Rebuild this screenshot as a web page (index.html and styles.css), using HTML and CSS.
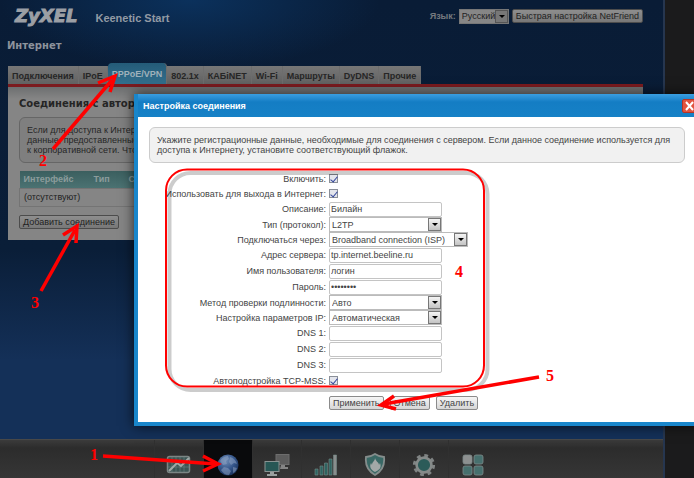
FILE: index.html
```html
<!DOCTYPE html>
<html lang="ru">
<head>
<meta charset="utf-8">
<title>ZyXEL Keenetic Start</title>
<link rel="stylesheet" href="styles.css">
</head>
<body>
<div class="app">
  <header class="top">
    <span class="logo">ZyXEL</span>
    <span class="model">Keenetic Start</span>
    <div class="tools">
      <label class="lang" for="lang">Язык:</label>
      <span class="pick pick-lang"><select id="lang"><option>Русский</option></select></span>
      <button class="btn btn-dim" type="button">Быстрая настройка NetFriend</button>
    </div>
  </header>
  <h1 class="title">Интернет</h1>
  <nav class="tabs">
    <a href="#">Подключения</a>
    <a href="#">IPoE</a>
    <a href="#" class="active">PPPoE/VPN</a>
    <a href="#">802.1x</a>
    <a href="#">КАБiNET</a>
    <a href="#">Wi-Fi</a>
    <a href="#">Маршруты</a>
    <a href="#">DyDNS</a>
    <a href="#">Прочие</a>
  </nav>
  <main class="panel">
    <h2>Соединения с автор</h2>
    <p class="note note-dim">Если для доступа к Интерн<br>данные, предоставленные<br>к корпоративной сети. Чтоб</p>
    <table class="links">
      <thead><tr><th class="c-if">Интерфейс</th><th class="c-type">Тип</th><th>С</th></tr></thead>
      <tbody><tr><td colspan="3">(отсутствуют)</td></tr></tbody>
    </table>
    <button class="btn btn-dim" type="button">Добавить соединение</button>
  </main>
  <nav class="dock">
    <a href="#" aria-label="Монитор"><svg width="26" height="22" viewBox="0 0 26 22"><rect x="1.500" y="2.500" width="22" height="16" rx="2" fill="#3c5553" stroke="#7b8584" stroke-width="1.500"/><path d="M6 3v15M10 3v15M14 3v15M18 3v15M2 8h21M2 13h21" stroke="#6a8583" stroke-width=".6"/><path d="M3 17l8-8 4 3 8-8" fill="none" stroke="#a2a8a7" stroke-width="2"/></svg></a>
    <a href="#" class="on" aria-label="Интернет"><svg width="24" height="24" viewBox="0 0 24 24"><defs><radialGradient id="g" cx=".4" cy=".3" r=".7"><stop offset="0" stop-color="#6f8cb4"/><stop offset=".6" stop-color="#34558a"/><stop offset="1" stop-color="#1c3560"/></radialGradient></defs><circle cx="12" cy="12" r="10.500" fill="url(#g)"/><path d="M4 8c2-4 6-5 8-5l1 3-3 2 1 3-4 1zM14 4c4 1 6 4 7 7l-3-1-3 2-2-3zM8 14l4 1 3 3-2 4c-4 0-6-2-8-5zM17 14l4 1c-1 3-2 4-4 5z" fill="#91a6c5" opacity=".5"/></svg></a>
    <a href="#" aria-label="Домашняя сеть"><svg width="26" height="24" viewBox="0 0 26 24"><rect x="12" y="1.500" width="13" height="10" fill="#5d5d5d" stroke="#6d6d6d"/><path d="M17 12h4v2h3v2h-8z" fill="#858585"/><rect x="1" y="8.500" width="14" height="10" fill="#275755" stroke="#899392"/><path d="M6 19h4v2h3v2H3v-2h3z" fill="#9aa1a0"/></svg></a>
    <a href="#" aria-label="Беспроводная сеть"><svg width="24" height="22" viewBox="0 0 24 22"><g stroke="#738987" stroke-width=".6"><path fill="#2f6461" d="M1 15h3v6H1zM6 12h3v9H6zM10.500 9h3v12h-3zM15 5h3v16h-3z"/><path fill="#898d8d" d="M19.500 1h3v20h-3z"/></g></svg></a>
    <a href="#" aria-label="Безопасность"><svg width="22" height="24" viewBox="0 0 22 24"><path d="M11 1c3 2 6 3 9 3 1 8-2 14-9 18C4 18 1 12 2 4c3 0 6-1 9-3z" fill="#396865" stroke="#858d8c" stroke-width="1.800"/><path d="M11 5c1 4 4 4 4 7l1-2c2 5-1 7-5 9-4-2-6-5-4-9l1 2c0-3 3-4 3-7z" fill="#a2a8a7"/></svg></a>
    <a href="#" aria-label="Система"><svg width="24" height="24" viewBox="0 0 24 24"><circle cx="12" cy="12" r="9.600" fill="none" stroke="#808484" stroke-width="3" stroke-dasharray="3.770 3.770"/><circle cx="12" cy="12" r="7.400" fill="#2c5b59" stroke="#858a89" stroke-width="2.600"/></svg></a>
    <a href="#" aria-label="Приложения"><svg width="22" height="22" viewBox="0 0 22 22"><g stroke="#7f8b8a" stroke-width=".8"><rect x="1" y="1" width="9" height="9" rx="2" fill="#8d9090"/><rect x="12" y="1" width="9" height="9" rx="2" fill="#47706e"/><rect x="1" y="12" width="9" height="9" rx="2" fill="#47706e"/><rect x="12" y="12" width="9" height="9" rx="2" fill="#47706e"/></g></svg></a>
  </nav>
</div>

<section class="dialog" role="dialog" aria-labelledby="dlg">
  <header class="bar"><h2 id="dlg">Настройка соединения</h2><button class="close" type="button" aria-label="Закрыть"><svg width="14" height="12" viewBox="0 0 14 12"><path d="M3 2l7 8M10 2L3 10" stroke="#fff" stroke-width="2"/></svg></button></header>
  <form class="body">
    <p class="note">Укажите регистрационные данные, необходимые для соединения с сервером. Если данное соединение используется для<br>доступа к Интернету, установите соответствующий флажок.</p>
    <div class="fields">
      <div class="row short"><label for="f1">Включить:</label><input id="f1" type="checkbox" checked></div>
      <div class="row short"><label for="f2">Использовать для выхода в Интернет:</label><input id="f2" type="checkbox" checked></div>
      <div class="row"><label for="f3">Описание:</label><input id="f3" type="text" value="Билайн"></div>
      <div class="row short"><label for="f4">Тип (протокол):</label><span class="pick"><select id="f4"><option>L2TP</option></select></span></div>
      <div class="row short"><label for="f5">Подключаться через:</label><span class="pick pick-wide"><select id="f5"><option>Broadband connection (ISP)</option></select></span></div>
      <div class="row"><label for="f6">Адрес сервера:</label><input id="f6" type="text" value="tp.internet.beeline.ru"></div>
      <div class="row"><label for="f7">Имя пользователя:</label><input id="f7" type="text" value="логин"></div>
      <div class="row"><label for="f8">Пароль:</label><input id="f8" type="password" value="password"></div>
      <div class="row short"><label for="f9">Метод проверки подлинности:</label><span class="pick"><select id="f9"><option>Авто</option></select></span></div>
      <div class="row short"><label for="f10">Настройка параметров IP:</label><span class="pick"><select id="f10"><option>Автоматическая</option></select></span></div>
      <div class="row"><label for="f11">DNS 1:</label><input id="f11" type="text"></div>
      <div class="row"><label for="f12">DNS 2:</label><input id="f12" type="text"></div>
      <div class="row"><label for="f13">DNS 3:</label><input id="f13" type="text"></div>
      <div class="row short"><label for="f14">Автоподстройка TCP-MSS:</label><input id="f14" type="checkbox" checked></div>
    </div>
    <div class="actions">
      <button class="btn" type="button">Применить</button>
      <button class="btn" type="button">Отмена</button>
      <button class="btn" type="button">Удалить</button>
    </div>
  </form>
</section>

<svg class="marks" width="694" height="478" viewBox="0 0 694 478">
  <rect x="169.500" y="173" width="318" height="217" rx="21" fill="none" stroke="#000" stroke-opacity=".2" stroke-width="4"/>
  <rect x="166" y="169.500" width="318" height="217" rx="21" fill="none" stroke="#f00" stroke-width="2"/>
  <g fill="none" stroke="#f00" stroke-width="3.500">
    <path d="M103 456L216 464"/><path d="M203 456L218 464L203 471"/>
    <path d="M53 149L112 80"/><path d="M98 83L115 76L110 92"/>
    <path d="M41 291L75 230"/><path d="M63 235L77 226L76 243"/>
    <path d="M539 377L384 404"/><path d="M394 396L381 405L396 409"/>
  </g>
  <g class="nums"><text x="90" y="460">1</text><text x="39" y="166">2</text><text x="31" y="308">3</text><text x="455" y="277">4</text><text x="546" y="381">5</text></g>
</svg>
</body>
</html>
```
FILE: styles.css
```css
* { box-sizing: border-box; }
body {
  margin: 0;
  background: #1b1b1c;
  font: 9px/10px "Liberation Sans", Arial, sans-serif;
  color: #444;
  overflow: hidden;
}
h1, h2, p { margin: 0; }
a { color: inherit; text-decoration: none; }
input, select, button { font: inherit; color: inherit; margin: 0; }

.app {
  display: flex;
  flex-direction: column;
  height: 100vh;
  margin-right: 29px;
  border-right: 2px solid #26364f;
  background:
    radial-gradient(ellipse 190px 70px at 190px 0, #0b315c, transparent),
    linear-gradient(#091c36 0, #0a1e38 250px, #143058 360px, #143058 100%);
}
.top {
  display: flex;
  align-items: center;
  gap: 18px;
  height: 32px;
  padding: 0 20px 0 15px;
}
.logo { font: italic bold 18px/20px "DejaVu Sans", Verdana, sans-serif; color: #9b9fa5; -webkit-text-stroke: 1px #9b9fa5; }
.model { font-size: 11px; font-weight: bold; color: #929aa4; padding-top: 4px; }
.tools { display: flex; align-items: center; gap: 3px; margin-left: auto; }
.lang { font-weight: bold; color: #75797f; }
.title { font: bold 10px/14px "DejaVu Sans", Verdana, sans-serif; color: #8d939c; padding: 7px 7px 10px; }

.tabs { display: flex; align-items: flex-end; height: 21px; margin-left: 8px; font-weight: bold; }
.tabs a {
  height: 18px;
  padding: 5px 4px 0;
  background: linear-gradient(#777, #626262);
  border-right: 1px solid #6d6d6d;
  color: #262626;
}
.tabs .active {
  height: 21px;
  padding-top: 6px;
  border-radius: 4px 4px 0 0;
  background: linear-gradient(#245b78, #336f8d);
  color: #9fb1bb;
}
.panel {
  margin: 0 20px 0 8px;
  padding: 10px 11px 11px;
  border-top: 3px solid #7c1b1f;
  background: linear-gradient(#6d6f70, #858585 12px);
}
.panel h2 { font: bold 10px/14px "DejaVu Sans", Verdana, sans-serif; color: #252525; }

.note {
  padding: 7px;
  border: 1px solid #ccc;
  border-radius: 6px;
  background: #f1f1f1;
}
.note-dim { margin: 6px 0 8px; border-color: #666; background: #7f7f7f; color: #262626; }

.links { width: 100%; border-collapse: collapse; margin-bottom: 8px; color: #222; }
.links th { height: 17px; padding: 0 4px; text-align: left; color: #8c9c9c; background: linear-gradient(#3b5f5f, #4b7272); }
.links td { height: 18px; padding: 0 4px; border: 1px solid #747474; }
.c-if, .c-type { width: 70px; }
.c-type { width: 35px; }

.btn {
  height: 14px;
  padding: 0 3px;
  border: 1px solid #8b8b8b;
  border-radius: 2px;
  background: linear-gradient(#f6f6f6, #d6d6d6);
  line-height: 10px;
  white-space: nowrap;
}
.btn-dim { border-color: #4c4c4c; background: linear-gradient(#8e8e8e, #777); color: #222; }

.pick { position: relative; display: flex; width: 113px; height: 15px; }
.pick select {
  appearance: none;
  width: 100%;
  padding: 0 12px 0 2px;
  border: 1px solid #bbb;
  border-radius: 0;
  background: #fff;
}
.pick::before {
  content: "";
  position: absolute;
  top: 1px; right: 1px; bottom: 1px;
  width: 11px;
  border: 1px solid #777;
  background: linear-gradient(#f4f4f4, #c4c4c4);
  pointer-events: none;
}
.pick::after {
  content: "";
  position: absolute;
  top: 6px; right: 4px;
  border: 3px solid transparent;
  border-top-color: #000;
  border-bottom: 0;
  pointer-events: none;
}
.pick-wide { width: 139px; }
.pick-lang { width: 50px; }
.pick-lang select { background: #868686; border-color: #777; color: #222; }
.pick-lang::before { background: #777; border-color: #555; }

.dock {
  display: flex;
  height: 39px;
  margin-top: auto;
  padding-left: 154px;
  border-top: 1px solid #484848;
  background: linear-gradient(#3b3b3b, #2c2c2c 8px, #363636);
}
.dock a { display: grid; place-items: center; width: 49px; padding-top: 11px; border-left: 1px solid #303030; }
.dock .on { background: #090a0c; }

.dialog {
  position: absolute;
  left: 134px;
  right: -6px;
  top: 94px;
  border: 4px solid #1986cb;
  border-top: 0;
  background: #fff;
  box-shadow: 0 0 12px #000b;
}
.bar {
  display: flex;
  align-items: center;
  justify-content: space-between;
  height: 23px;
  padding-left: 5px;
  background: linear-gradient(#3a9ee0, #147dc4 8px, #1681c6);
}
.bar h2 { font-size: 9px; color: #fff; }
.close { width: 14px; height: 14px; padding: 0; border: 1px solid #b83324; border-radius: 2px; background: #e2543f; display: grid; }
.body { padding: 10px 11px 12px; }
.fields { padding-top: 8px; }
.row { display: grid; grid-template-columns: 177px 1fr; column-gap: 3px; align-items: center; height: 16px; }
.short { height: 15px; }
.row label { text-align: right; }
.row input[type="text"], .row input[type="password"] {
  width: 113px;
  height: 15px;
  padding: 0 1px;
  border: 1px solid #c4c4c4;
  border-radius: 2px;
  background: #fff;
}
.row input[type="checkbox"] {
  appearance: none;
  display: grid;
  place-items: center;
  width: 9px;
  height: 9px;
  border: 1px solid #8a8f98;
  background: #e3e5ec;
}
.row input[type="checkbox"]::before {
  content: "";
  width: 3px;
  height: 6px;
  border: solid #33469b;
  border-width: 0 1px 1px 0;
  transform: rotate(40deg);
}
.actions { display: flex; gap: 6px; padding: 8px 0 0 180px; }

.marks { position: absolute; left: 0; top: 0; pointer-events: none; }
.nums { font: bold 16px "Liberation Serif", "Times New Roman", serif; fill: #f00; }
```
